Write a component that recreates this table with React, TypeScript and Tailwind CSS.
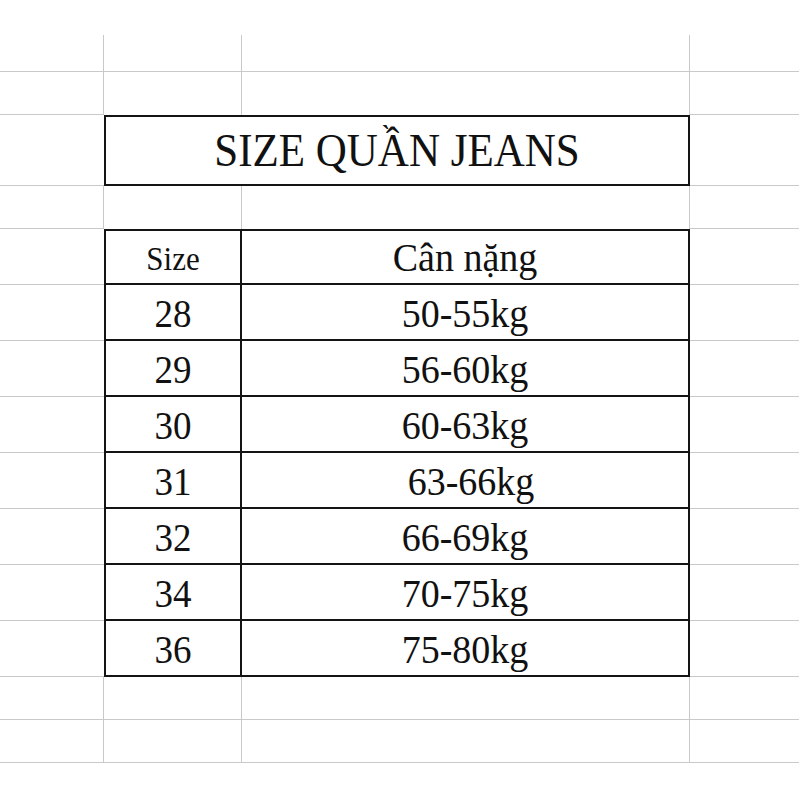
const sizes = [
  { size: "28", weight: "50-55kg" },
  { size: "29", weight: "56-60kg" },
  { size: "30", weight: "60-63kg" },
  { size: "31", weight: "63-66kg", shift: true },
  { size: "32", weight: "66-69kg" },
  { size: "34", weight: "70-75kg" },
  { size: "36", weight: "75-80kg" },
];

const grid = "border-[#c9c9c9]";
const ink = "border-[#141414]";

function BlankRow({ h, open }: { h: string; open?: boolean }) {
  // open = no bottom line under the two middle columns (a box starts below)
  return (
    <div className={`grid grid-cols-[104px_138px_448px_1fr] ${h}`}>
      <div className={`border-r border-b ${grid}`} />
      <div className={`border-r ${grid} ${open ? "" : "border-b"}`} />
      <div className={`border-r ${grid} ${open ? "" : "border-b"}`} />
      <div className={`border-b ${grid}`} />
    </div>
  );
}

function TableRow({
  first,
  left,
  right,
  leftCls,
  rightCls,
}: {
  first?: boolean;
  left: string;
  right: string;
  leftCls: string;
  rightCls: string;
}) {
  return (
    <div className="grid h-[56px] grid-cols-[104px_138px_448px_1fr]">
      <div className={`border-b ${grid}`} />
      <div
        className={`flex items-center justify-center border-l-2 border-r-2 border-b-2 ${ink} ${first ? "border-t-2" : ""} ${leftCls}`}
      >
        <span className="inline-block scale-y-[1.08]">{left}</span>
      </div>
      <div
        className={`flex items-center justify-center border-r-2 border-b-2 ${ink} ${first ? "border-t-2" : ""} ${rightCls}`}
      >
        <span className="inline-block scale-y-[1.08]">{right}</span>
      </div>
      <div className={`border-b ${grid}`} />
    </div>
  );
}

export default function App() {
  return (
    <div
      className="h-[799px] w-[799px] overflow-hidden bg-white pt-[35px] text-[#111]"
      style={{ fontFamily: '"Liberation Serif", "Times New Roman", serif' }}
    >
      <BlankRow h="h-[37px]" />
      <BlankRow h="h-[43px]" open />

      <div className="grid h-[71px] grid-cols-[104px_586px_1fr]">
        <div className={`border-b ${grid}`} />
        <div
          className={`flex items-center justify-center border-2 ${ink} text-[43px] leading-none`}
        >
          <span className="inline-block scale-y-[1.08]">SIZE QUẦN JEANS</span>
        </div>
        <div className={`border-b ${grid}`} />
      </div>

      <BlankRow h="h-[43px]" open />

      <TableRow
        first
        left="Size"
        right="Cân nặng"
        leftCls="text-[31px] leading-none pt-[2px]"
        rightCls="text-[38px] leading-none"
      />
      {sizes.map((r) => (
        <TableRow
          key={r.size}
          left={r.size}
          right={r.weight}
          leftCls="text-[37px] leading-none pt-[2px]"
          rightCls={`text-[38px] leading-none pt-[2px] ${r.shift ? "pl-[12px]" : ""}`}
        />
      ))}

      <BlankRow h="h-[43px]" />
      <BlankRow h="h-[43px]" />
    </div>
  );
}
